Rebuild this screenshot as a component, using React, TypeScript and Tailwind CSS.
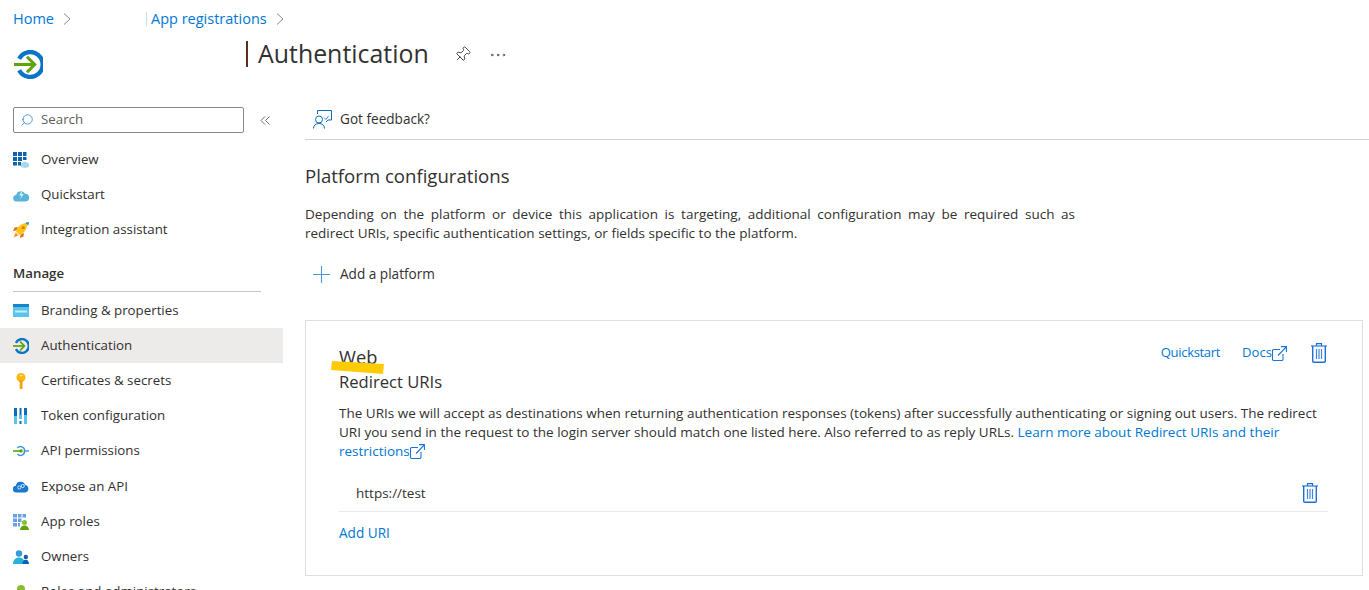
import React from 'react';
import { Ellipsis, Pin, Search } from 'lucide-react';

const AuthIcon = ({ size = 16 }: { size?: number }) => (
  <svg width={size} height={size} viewBox="0 0 28 28" fill="none">
    <path d="M5 8.500A12 12 0 1 1 5 19.500" stroke="#0a74c9" strokeWidth="4.200" />
    <path d="M0 14h19" stroke="#5ea40a" strokeWidth="3" />
    <path d="M12.500 6.500 20 14l-7.500 7.500" stroke="#5ea40a" strokeWidth="3" />
  </svg>
);

const Chevron = () => (
  <svg width="8" height="12" viewBox="0 0 8 12" fill="none" stroke="#8a8886" strokeWidth="1" className="shrink-0">
    <path d="M1 .5 7 6l-6 5.500" />
  </svg>
);

const CollapseIcon = () => (
  <svg width="10" height="9" viewBox="0 0 10 9" fill="none" stroke="#605e5c" strokeWidth=".9" className="shrink-0">
    <path d="M5 .5 1 4.500l4 4M9.500 .5l-4 4 4 4" />
  </svg>
);

const OverviewIcon = () => (
  <svg width="16" height="16" viewBox="0 0 16 16">
    <path d="M0 0h4v4H0zM5 0h4v4H5zM10 0h3.500v4H10zM0 5h4v4H0zM5 5h4v4H5zM10 5h3.500v3H10zM0 10h4v3.500H0zM5 10h3v3.500H5z" fill="#0f62ad" />
    <path d="M8 11.500 12 9.500l4 2v3.500l-4 1-4-1z" fill="#a6d8ef" />
  </svg>
);

const CloudIcon = () => (
  <svg width="16" height="14" viewBox="0 0 16 14">
    <path d="M3.800 13.500a3.300 3.300 0 0 1-.6-6.600A4.800 4.800 0 0 1 12 5.700a3.900 3.900 0 0 1 .3 7.800z" fill="#59b4d9" />
    <path d="M9.500 1.500 6.200 7.500h2.300L7 11.500l3.800-5.500H8.400l1.800-4.500z" fill="#d9f0f9" />
  </svg>
);

const RocketIcon = () => (
  <svg width="16" height="16" viewBox="0 0 16 16">
    <path d="M5 5 1.500 5.500 0 9l3.500-.5zM11 11l-.5 3.500L7 16l.5-3.500z" fill="#e8730c" />
    <path d="M3 9.500C4.500 4.500 9 1 14.500 .8 14.500 6.500 11 11.500 6.500 13z" fill="#fcc419" />
    <path d="M12.500 .8 16 0l-.7 3.500z" fill="#2b7cd3" />
    <circle cx="10.200" cy="5.800" r="1.500" fill="#e8730c" />
    <path d="M2.800 10.500 5.500 13.200 .5 15.500z" fill="#f7941d" />
  </svg>
);

const BrandingIcon = () => (
  <svg width="16" height="13" viewBox="0 0 16 13">
    <rect width="16" height="13" fill="#59c5ea" />
    <rect width="16" height="3" fill="#1585c7" />
    <path d="M2 6.500h12v2H2z" fill="#c6ecf8" />
  </svg>
);

const KeyIcon = () => (
  <svg width="16" height="16" viewBox="0 0 16 16">
    <circle cx="8" cy="4.500" r="4.500" fill="#fcb913" />
    <path d="M6.500 7h3v9h-2l-1-1.200v-1l1-.8-1-.8v-1l.8-.7-.8-.7z" fill="#f59d0e" />
    <rect x="6.600" y="1.800" width="2.800" height="1.400" rx=".6" fill="#ffe28a" />
  </svg>
);

const TokenIcon = () => (
  <svg width="14" height="16" viewBox="0 0 14 16">
    <path d="M1 0h3v16H1zM6.500 0h2v11h-2zM6.500 13h2v3h-2zM11 0h3v16h-3z" fill="#0f6cbd" />
    <path d="M1 8h3v8H1zM11 7h3v9h-3zM6.500 7h2v4h-2z" fill="#59c5ea" />
  </svg>
);

const PermissionsIcon = () => (
  <svg width="16" height="16" viewBox="0 0 16 16" fill="none">
    <path d="M0 8h9" stroke="#5ea40a" strokeWidth="1.600" />
    <circle cx="8" cy="8" r="1.800" fill="#5ea40a" />
    <path d="M4.500 5a4 4 0 0 1 7 3 4 4 0 0 1-7 3" stroke="#3a96dd" strokeWidth="1.400" />
    <path d="M12 8h4" stroke="#3a96dd" strokeWidth="1.400" />
  </svg>
);

const ExposeIcon = () => (
  <svg width="16" height="13" viewBox="0 0 16 13">
    <path d="M3.500 12.500a3.400 3.400 0 0 1-.6-6.800A4.700 4.700 0 0 1 12 5a3.800 3.800 0 0 1 .3 7.500z" fill="#1a78d0" />
    <circle cx="6.300" cy="7.500" r="1.600" fill="none" stroke="#cfe8fa" strokeWidth="1" />
    <circle cx="9.700" cy="6" r="1.600" fill="none" stroke="#cfe8fa" strokeWidth="1" />
  </svg>
);

const RolesIcon = () => (
  <svg width="16" height="16" viewBox="0 0 16 16">
    <path d="M0 0h4v3.500H0zM5 0h3.500v3.500H5zM9.500 0H13v3.500H9.500zM0 4.500h4V8H0zM5 4.500h3.500V8H5zM0 9h4v3.500H0zM5 9h2v3.500H5z" fill="#69a1e8" />
    <circle cx="11.500" cy="8.500" r="2.500" fill="#86c02d" />
    <path d="M7 16c0-3 2-4.500 4.500-4.500S16 13 16 16z" fill="#5ea40a" />
  </svg>
);

const OwnersIcon = () => (
  <svg width="16" height="14" viewBox="0 0 16 14">
    <circle cx="6" cy="3.500" r="3.200" fill="#3a96dd" />
    <path d="M0 14c0-4 2.500-6.500 6-6.500s6 2.500 6 6.500z" fill="#27b4d8" />
    <circle cx="12.800" cy="7" r="2.200" fill="#0f5fb3" />
    <path d="M9.500 14c0-2.500 1.300-4.200 3.300-4.200S16 11.500 16 14z" fill="#0f5fb3" />
  </svg>
);

const AdminsIcon = () => (
  <svg width="16" height="16" viewBox="0 0 16 16">
    <circle cx="8" cy="5" r="4" fill="#86c02d" />
    <path d="M1 16c0-3.500 3-5.500 7-5.500s7 2 7 5.500z" fill="#5ea40a" />
  </svg>
);

const FeedbackIcon = () => (
  <svg width="19" height="19" viewBox="0 0 19 19" fill="none" stroke="#0f6cbd" strokeWidth="1">
    <path d="M4.500 4V.5h14v9.500H15l-2 2" />
    <path d="M11 7.500 13 9.500 15.500 6" stroke="#3a86d8" />
    <circle cx="6" cy="9.500" r="3.500" />
    <path d="M.5 18.500c0-3.200 2.300-5 5.500-5s5.500 1.800 5.500 5" />
  </svg>
);

const PlusIcon = () => (
  <svg width="17" height="17" viewBox="0 0 17 17" fill="none" stroke="#4a9ae0" strokeWidth="1.100" className="shrink-0">
    <path d="M8.500 0v17M0 8.500h17" />
  </svg>
);

const ExternalIcon = () => (
  <svg width="15" height="15" viewBox="0 0 15 15" fill="none" stroke="#1a73d9" strokeWidth="1.100" className="inline-block align-[-3px]">
    <path d="M8 3.500H1.800a1.300 1.300 0 0 0-1.300 1.300v8.400a1.300 1.300 0 0 0 1.300 1.300h7.900a1.300 1.300 0 0 0 1.300-1.300V8" />
    <path d="M6 9.500 14.300 .8M9 .6h5.400V6" />
  </svg>
);

const TrashIcon = () => (
  <svg width="16" height="20" viewBox="0 0 16 20" fill="none" stroke="#1a6fd8">
    <path d="M0 3h16" strokeWidth="1.400" stroke="#4a8fe4" />
    <path d="M5.500 3V.7h5V3" strokeWidth="1.200" />
    <path d="M1.700 3v15.300a1 1 0 0 0 1 1h10.600a1 1 0 0 0 1-1V3" strokeWidth="1.400" />
    <path d="M5.500 6v10M8 6v10M10.500 6v10" strokeWidth="1.200" stroke="#3f86e0" />
  </svg>
);

const navTop = [
  { label: 'Overview', icon: <OverviewIcon /> },
  { label: 'Quickstart', icon: <CloudIcon /> },
  { label: 'Integration assistant', icon: <RocketIcon /> },
];

const navManage = [
  { label: 'Branding & properties', icon: <BrandingIcon /> },
  { label: 'Authentication', icon: <AuthIcon />, active: true },
  { label: 'Certificates & secrets', icon: <KeyIcon /> },
  { label: 'Token configuration', icon: <TokenIcon /> },
  { label: 'API permissions', icon: <PermissionsIcon /> },
  { label: 'Expose an API', icon: <ExposeIcon /> },
  { label: 'App roles', icon: <RolesIcon /> },
  { label: 'Owners', icon: <OwnersIcon /> },
  { label: 'Roles and administrators', icon: <AdminsIcon /> },
];

const NavRow = ({ label, icon, active }: { label: string; icon: React.ReactNode; active?: boolean }) => (
  <div className={`flex h-[35.2px] shrink-0 items-center pl-[13px] ${active ? 'bg-[#edebe9]' : ''}`}>
    <span className="flex w-[28px] shrink-0 items-center">{icon}</span>
    <span className="whitespace-nowrap text-[13.3px] text-[#323130]">{label}</span>
  </div>
);

export default function App() {
  return (
    <div className="flex h-[590px] w-[1369px] flex-col overflow-hidden bg-white font-['Open_Sans','Noto_Sans',sans-serif] text-[#323130]">
      {/* breadcrumb */}
      <div className="flex h-[37px] shrink-0 items-center pl-[13px] text-[14.5px] text-[#0078d4]">
        <span>Home</span>
        <span className="ml-[9px]"><Chevron /></span>
        <span className="ml-[75px] border-l border-[#c7e0f4] pl-[4px] leading-[14px]">App registrations</span>
        <span className="ml-[9px]"><Chevron /></span>
      </div>

      {/* title */}
      <div className="flex h-[63px] shrink-0">
        <div className="w-[246px] shrink-0 pl-[14px] pt-[13px]">
          <AuthIcon size={29} />
        </div>
        <div className="flex h-[34px] items-center">
          <span className="mr-[10px] h-[26px] w-[2px] bg-[#5c2d1e]" />
          <h1 className="mb-[2px] text-[24.900px] leading-[32px] text-[#323130]">Authentication</h1>
          <Pin size={17} strokeWidth={1.2} className="ml-[25px] rotate-45 text-[#323130]" />
          <Ellipsis size={20} strokeWidth={1} className="ml-[17px] mt-[2px] text-[#484644]" />
        </div>
      </div>

      <div className="flex min-h-0 flex-1">
        {/* sidebar */}
        <aside className="flex w-[283px] shrink-0 flex-col">
          <div className="flex h-[42px] shrink-0 items-center pb-[2px] pl-[13px]">
            <div className="flex h-[26px] w-[231px] items-center rounded-[2px] border border-[#8a8886] pl-[6px]">
              <Search size={14} strokeWidth={1.2} className="-scale-x-100 text-[#0078d4]" />
              <span className="ml-[7px] text-[13.3px] text-[#605e5c]">Search</span>
            </div>
            <span className="ml-[16px]"><CollapseIcon /></span>
          </div>
          {navTop.map((item) => (
            <NavRow key={item.label} {...item} />
          ))}
          <div className="mx-[13px] mt-[16px] h-[28px] w-[248px] shrink-0 border-b border-[#c8c6c4] text-[13.3px] font-semibold leading-[18px]">
            Manage
          </div>
          <div className="h-[1.5px] shrink-0" />
          {navManage.map((item) => (
            <NavRow key={item.label} {...item} />
          ))}
        </aside>

        {/* main */}
        <main className="min-w-0 flex-1 pl-[22px]">
          <div className="flex h-[40px] items-center border-b border-[#d2d0ce] pl-[8px]">
            <FeedbackIcon />
            <span className="ml-[8px] text-[13.6px]">Got feedback?</span>
          </div>

          <h2 className="mt-[24px] text-[18.600px] leading-[24px]">Platform configurations</h2>
          <p className="mt-[17px] w-[770px] text-justify text-[13.5px] leading-[19px]">
            <span className="block [text-align-last:justify]">
              Depending on the platform or device this application is targeting, additional configuration may be required such as
            </span>
            <span className="block">redirect URIs, specific authentication settings, or fields specific to the platform.</span>
          </p>
          <div className="mt-[19px] flex h-[24px] items-center pl-[8px]">
            <PlusIcon />
            <span className="ml-[10px] text-[13.6px]">Add a platform</span>
          </div>

          {/* web card */}
          <section className="relative mt-[34px] mr-[6px] h-[256px] border border-[#e1dfdd] pl-[33px] pr-[34px]">
            <svg width="54" height="14" viewBox="0 0 54 14" className="absolute left-[25px] top-[40px]">
              <path d="M1 0 53 3 52 13 0 9z" fill="#ffcb05" />
            </svg>
            <div className="flex h-[50px] items-start justify-between pt-[24px]">
              <h3 className="text-[18.300px] leading-[24px]">Web</h3>
              <div className="mr-[1px] mt-[-2px] flex items-center text-[13.1px] text-[#0078d4]">
                <span className="tracking-[-0.35px]">Quickstart</span>
                <span className="ml-[22px]">Docs</span>
                <ExternalIcon />
                <span className="ml-[24px]">
                  <TrashIcon />
                </span>
              </div>
            </div>
            <h4 className="text-[16.600px] leading-[21px]">Redirect URIs</h4>
            <p className="mt-[12px] text-[13.5px] leading-[19px]">
              The URIs we will accept as destinations when returning authentication responses (tokens) after successfully authenticating or signing out users. The redirect URI you send in the request to the login server should match one listed here. Also referred to as reply URLs.{' '}
              <span className="text-[#0078d4]">
                Learn more about Redirect URIs and their restrictions
                <ExternalIcon />
              </span>
            </p>
            <div className="mt-[14px] flex h-[37px] items-center justify-between border-b border-[#edebe9] pl-[17px] pr-[10px] text-[13.5px]">
              <span>https://test</span>
              <TrashIcon />
            </div>
            <div className="mt-[12px] text-[13.6px] leading-[18px] text-[#0078d4]">Add URI</div>
          </section>
        </main>
      </div>
    </div>
  );
}
